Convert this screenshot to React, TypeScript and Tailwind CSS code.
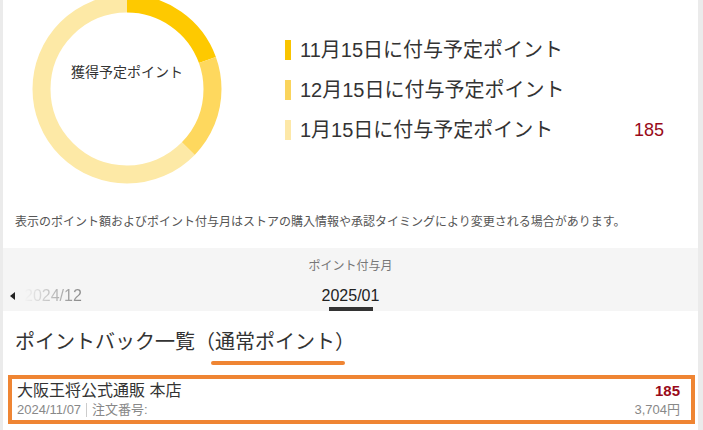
import React from "react";

const R = 85.5;
const C = 2 * Math.PI * R;

const segments = [
	{ from: 0, to: 70, color: "#fec900" },
	{ from: 70, to: 134, color: "#fed85e" },
	{ from: 134, to: 360, color: "#fde9a6" }
];

const legend = [
	{ label: "11月15日に付与予定ポイント", bar: "bg-[#f9c400]", value: "" },
	{ label: "12月15日に付与予定ポイント", bar: "bg-[#fad45c]", value: "" },
	{ label: "1月15日に付与予定ポイント", bar: "bg-[#fde8a8]", value: "185" }
];

const Donut = () => (
	<div className="relative ml-[29px] mt-[-6px] h-[190px] w-[190px] shrink-0">
		<svg width={190} height={190} viewBox="0 0 190 190">
			{segments.map((s, i) => {
				const len = ((s.to - s.from) / 360) * C;
				const start = (s.from / 360) * C;
				return (
					<circle
						key={i}
						cx={95}
						cy={95}
						r={R}
						fill="none"
						stroke={s.color}
						strokeWidth={18}
						strokeDasharray={`${len} ${C}`}
						strokeDashoffset={-start}
						transform="rotate(-90 95 95)"
					/>
				);
			})}
		</svg>
		<div className="absolute left-0 right-0 top-[69px] text-center text-[14px] leading-[18px] text-[#333]">
			獲得予定ポイント
		</div>
	</div>
);

export default function App() {
	return (
		<div className="h-[430px] w-[703px] overflow-hidden bg-[#ebebeb] font-['Liberation_Sans','Noto_Sans_CJK_JP',sans-serif]">
			<div className="ml-[3px] h-full w-[695px] bg-white">
				{/* chart */}
				<div className="flex h-[200px] items-start">
					<Donut />
					<div className="ml-[63px] w-[379px] pt-[40px]">
						{legend.map((row) => (
							<div
								key={row.label}
								className="mb-[20px] flex h-[20px] items-center justify-between"
							>
								<div className="flex items-center">
									<span className={`h-[20px] w-[6px] ${row.bar}`} />
									<span className="ml-[9px] text-[20px] leading-[20px] text-[#333]">
										{row.label}
									</span>
								</div>
								<span className="text-[18px] leading-[20px] text-[#990a1a]">
									{row.value}
								</span>
							</div>
						))}
					</div>
				</div>

				<p className="pl-[12px] pt-[14px] pb-[18px] text-[12px] leading-[16px] text-[#555]">
					表示のポイント額およびポイント付与月はストアの購入情報や承認タイミングにより変更される場合があります。
				</p>

				{/* month tabs */}
				<div className="flex h-[63px] flex-col bg-[#f5f5f5] pt-[10px]">
					<div className="text-center text-[12px] leading-[16px] text-[#777]">
						ポイント付与月
					</div>
					<div className="mt-[12px] grid h-[20px] grid-cols-3 items-center">
						<div className="flex items-center pl-[7px]">
							<span className="h-0 w-0 border-y-[4px] border-r-[5px] border-y-transparent border-r-[#222]" />
							<span className="ml-[9px] bg-gradient-to-r from-[#f5f5f5] to-[#888] bg-clip-text text-[16px] leading-[20px] text-transparent">
								2024/12
							</span>
						</div>
						<div className="text-center text-[16px] leading-[20px] text-[#222]">
							2025/01
						</div>
						<div />
					</div>
					<div className="mx-auto mt-[1px] h-[4px] w-[44px] bg-[#333]" />
				</div>

				{/* list */}
				<div className="pl-[12px] pt-[17px]">
					<h2 className="text-[20px] leading-[28px] text-[#333]">
						ポイントバック一覧（
						<span className="relative">
							通常ポイント
							<span className="absolute left-[-4px] right-[-10px] top-[30px] h-[4px] rounded-full bg-[#ef8533]" />
						</span>
						）
					</h2>
				</div>

				<div className="ml-[5px] mt-[19px] w-[687px] border-[4px] border-[#ef8533] pb-[1px] pl-[5px] pr-[11px] pt-[2px]">
					<div className="flex h-[20px] items-center justify-between">
						<span className="text-[16px] leading-[20px] text-[#333]">
							大阪王将公式通販 本店
						</span>
						<span className="text-[15px] font-bold leading-[20px] text-[#990a1a]">
							185
						</span>
					</div>
					<div className="flex h-[18px] items-center justify-between text-[13px] leading-[18px] text-[#888]">
						<div className="flex items-center">
							<span>2024/11/07</span>
							<span className="mx-[5px] h-[14px] w-px bg-[#ccc]" />
							<span>注文番号:</span>
						</div>
						<span>3,704円</span>
					</div>
				</div>
			</div>
		</div>
	);
}
